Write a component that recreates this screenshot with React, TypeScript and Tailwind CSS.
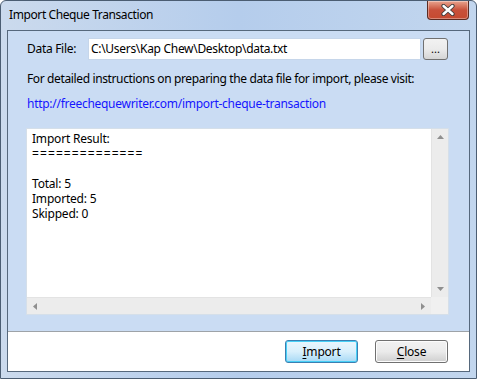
import React from 'react';

const font = { fontFamily: '"Noto Sans", "Open Sans", sans-serif' };

const TitleBar: React.FC = () => (
  <div className="relative h-[29px] flex items-center pl-2 pb-[2px]">
    <span className="text-[12px] text-black leading-none tracking-[-0.4px]">Import Cheque Transaction</span>
    <div className="absolute top-0 right-[7px] w-[42px] h-[19px] rounded-b-[4px] border border-t-0 border-[#5b2b22] bg-gradient-to-b from-[#e8a48f] via-[#c8503a] to-[#c54a30] flex items-center justify-center shadow-[inset_0_0_0_1px_rgba(255,255,255,0.35)]">
      <svg width="14" height="12" viewBox="0 0 14 12">
        <path d="M2.5 2 L11.5 10 M11.5 2 L2.5 10" stroke="#3b3b3b" strokeWidth="4.2" strokeLinecap="round" />
        <path d="M2.5 2 L11.5 10 M11.5 2 L2.5 10" stroke="#ffffff" strokeWidth="2.4" strokeLinecap="round" />
      </svg>
    </div>
  </div>
);

const Arrow: React.FC<{ dir: 'up' | 'down' | 'left' | 'right' }> = ({ dir }) => {
  const pts: Record<string, string> = {
    up: '0,4 3.5,0 7,4',
    down: '0,0 3.5,4 7,0',
    left: '4,0 0,3.5 4,7',
    right: '0,0 4,3.5 0,7',
  };
  const vertical = dir === 'up' || dir === 'down';
  return (
    <svg width={vertical ? 7 : 4} height={vertical ? 4 : 7} viewBox={vertical ? '0 0 7 4' : '0 0 4 7'}>
      <polygon points={pts[dir]} fill="#8f8f8f" />
    </svg>
  );
};

const ResultBox: React.FC = () => (
  <div className="mt-[17px] ml-[18px] w-[423px] h-[187px] border border-[#d5dfe9] bg-white flex flex-col">
    <div className="flex flex-1 min-h-0">
      <div className="flex-1 pl-[5px] pt-[2px] text-[12px] leading-[15px] text-black tracking-[-0.2px]">
        <div>Import Result:</div>
        <div className="tracking-[1.1px]">==============</div>
        <div className="h-[15px]" />
        <div>Total: 5</div>
        <div>Imported: 5</div>
        <div>Skipped: 0</div>
      </div>
      <div className="w-[17px] bg-[#ececec] border-l border-[#e3e3e3] flex flex-col items-center justify-between py-[6px]">
        <Arrow dir="up" />
        <Arrow dir="down" />
      </div>
    </div>
    <div className="h-[17px] flex">
      <div className="flex-1 bg-[#ececec] border-t border-[#e3e3e3] flex items-center justify-between px-[6px]">
        <Arrow dir="left" />
        <Arrow dir="right" />
      </div>
      <div className="w-[17px] bg-[#f0f0f0]" />
    </div>
  </div>
);

const Button: React.FC<{ mnemonic: string; rest: string; primary?: boolean }> = ({ mnemonic, rest, primary }) => (
  <button
    className={
      'w-[73px] h-[23px] rounded-[3px] border text-[12px] text-black bg-gradient-to-b flex items-center justify-center tracking-[-0.2px] ' +
      (primary
        ? 'border-[#3c7fb1] from-[#eaf6fd] via-[#d9f0fc] to-[#a7d9f5] shadow-[inset_0_0_0_1px_#48d0f7]'
        : 'border-[#707070] from-[#f2f2f2] via-[#ebebeb] to-[#cfcfcf] shadow-[inset_0_0_0_1px_#fcfcfc]')
    }
  >
    <span className="underline underline-offset-2">{mnemonic}</span>
    {rest}
  </button>
);

export default function App() {
  return (
    <div
      style={font}
      className="w-[477px] h-[379px] rounded-t-[6px] border border-[#4b5d72] bg-gradient-to-r from-[#cbdaed] via-[#b5cdec] to-[#c2d6ee] flex flex-col"
    >
      <TitleBar />
      <div className="mx-[6px] h-[342px] border border-[#56687c] bg-white flex flex-col">
        <div className="h-[300px] bg-[#cadcf3] flex flex-col">
          <div className="flex items-center pt-[7px] pl-[19px]">
            <span className="w-[61px] text-[12px] text-black tracking-[-0.3px]">Data File:</span>
            <div className="w-[333px] h-[22px] bg-white border border-[#c6d6ea] flex items-center pl-[2px] text-[12px] text-black tracking-[-0.3px]">
              C:\Users\Kap Chew\Desktop\data.txt
            </div>
            <button className="ml-[2px] w-[25px] h-[22px] rounded-[3px] border border-[#707070] bg-gradient-to-b from-[#f2f2f2] via-[#ebebeb] to-[#d5d5d5] text-[11px] leading-none text-black flex items-center justify-center pb-[2px]">
              ...
            </button>
          </div>
          <div className="mt-[11px] pl-[19px] text-[12px] leading-[15px] text-black tracking-[-0.37px]">
            For detailed instructions on preparing the data file for import, please visit:
          </div>
          <div className="mt-[10px] pl-[19px] text-[12px] leading-[15px] text-[#1515ff] tracking-[-0.28px]">
            http://freechequewriter.com/import-cheque-transaction
          </div>
          <ResultBox />
        </div>
        <div className="flex-1 border-t border-[#9ea3a8] flex items-center justify-end gap-[17px] pr-[21px]">
          <Button mnemonic="I" rest="mport" primary />
          <Button mnemonic="C" rest="lose" />
        </div>
      </div>
    </div>
  );
}
